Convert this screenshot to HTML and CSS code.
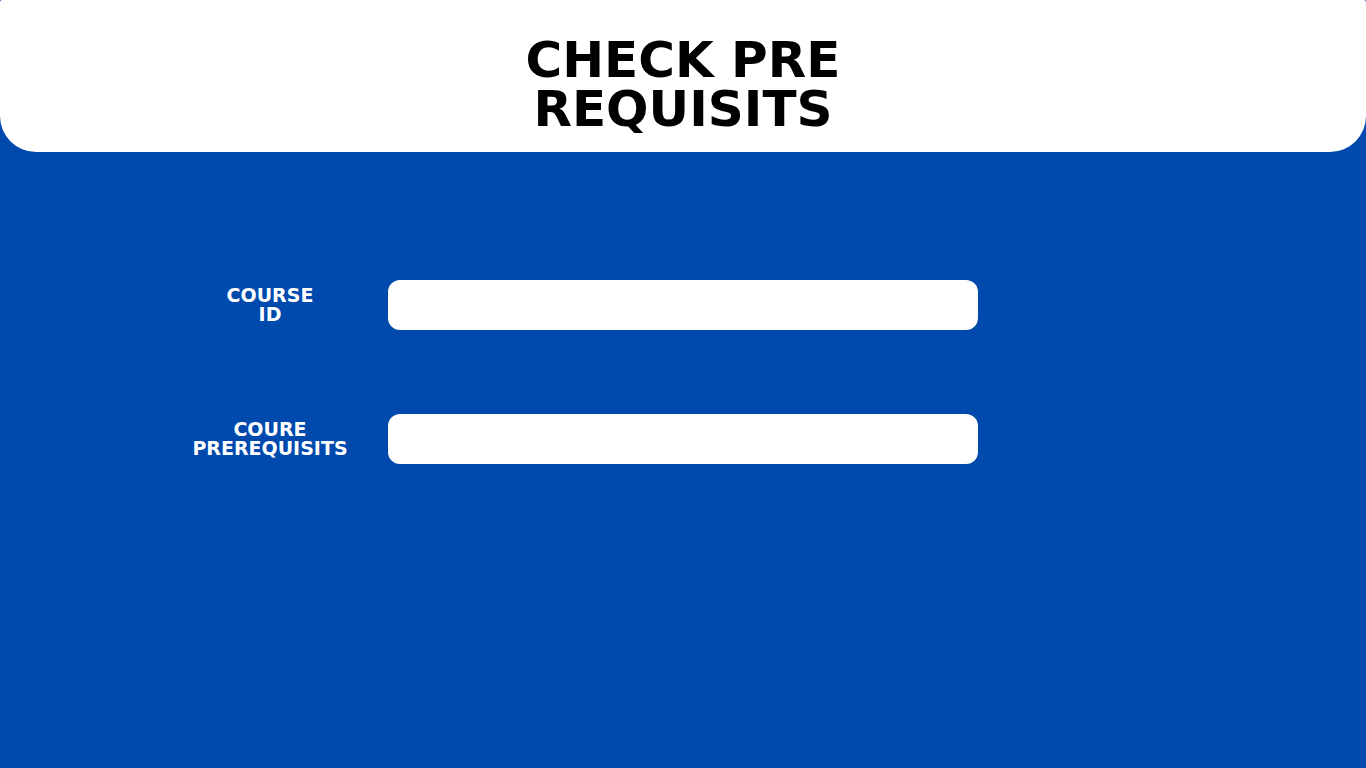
FILE: index.html
```
<!DOCTYPE html>
<html lang="en">
<head>
<meta charset="utf-8">
<meta name="viewport" content="width=device-width, initial-scale=1">
<title>Check Pre Requisits</title>
<link rel="stylesheet" href="styles.css">
</head>
<body>
<header class="banner">
  <h1 class="title">CHECK PRE<br>REQUISITS</h1>
</header>
<main class="content">
  <form class="form">
    <div class="field">
      <label class="label" for="course-id">COURSE<br>ID</label>
      <input class="input" id="course-id" type="text">
    </div>
    <div class="field">
      <label class="label" for="prerequisits">COURE<br>PREREQUISITS</label>
      <input class="input" id="prerequisits" type="text">
    </div>
  </form>
</main>
</body>
</html>
```
FILE: styles.css
```
* {
  box-sizing: border-box;
}

body {
  margin: 0;
  min-height: 100vh;
  background: #004aad;
  font-family: "DejaVu Sans", Inter, sans-serif;
  font-weight: 700;
}

.banner {
  padding: 36px 24px 18px;
  background: #fff;
  border-radius: 2px 2px 36px 36px;
  text-align: center;
}

.title {
  margin: 0;
  color: #000;
  font-size: 50px;
  line-height: 49px;
}

.content {
  padding: 128px 24px 24px;
}

.form {
  display: grid;
  gap: 84px;
}

/* Equal outer columns keep the text box centred on the page. */
.field {
  display: grid;
  grid-template-columns: minmax(168px, 1fr) minmax(0, 590px) minmax(0, 1fr);
  column-gap: 34px;
  align-items: center;
}

.label {
  justify-self: end;
  width: 168px;
  color: #fff;
  font-size: 19px;
  line-height: 19px;
  text-align: center;
}

.input {
  width: 100%;
  height: 50px;
  padding: 0 16px;
  border: 0;
  border-radius: 12px;
  background: #fff;
  font: inherit;
  font-size: 19px;
}
```
